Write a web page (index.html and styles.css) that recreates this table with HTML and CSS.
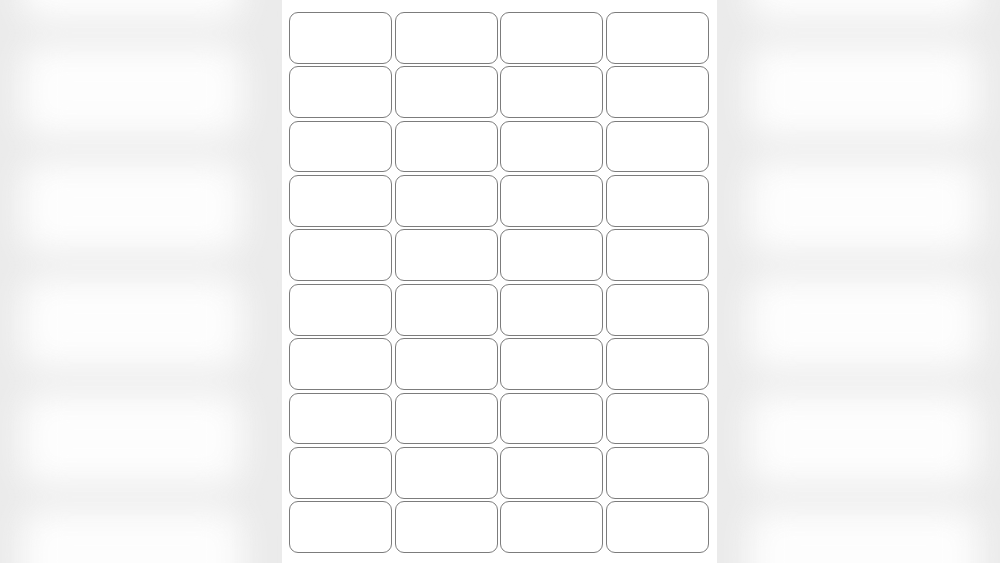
FILE: index.html
```html
<!DOCTYPE html>
<html lang="en">
<head>
    <meta charset="UTF-8">
    <meta name="viewport" content="width=device-width, initial-scale=1.0">
    <link rel="stylesheet" href="styles.css">
    <title>Label Sheet</title>
</head>
<body>
    <div class="backdrop left">
        <div class="blur-grid">
            <div class="blob"></div><div class="blob"></div><div class="blob"></div>
            <div class="blob"></div><div class="blob"></div><div class="blob"></div>
        </div>
    </div>
    <div class="sheet">
        <div class="labels" id="labels"></div>
    </div>
    <div class="backdrop right">
        <div class="blur-grid">
            <div class="blob"></div><div class="blob"></div><div class="blob"></div>
            <div class="blob"></div><div class="blob"></div><div class="blob"></div>
        </div>
    </div>
    <script>
        // 4 x 10 label sheet
        const labels = document.getElementById("labels");
        for (let i = 0; i < 40; i++) {
            const cell = document.createElement("div");
            cell.className = "label";
            labels.appendChild(cell);
        }
    </script>
</body>
</html>
```

FILE: styles.css
```css
/* label sheet preview */
html, body {
    margin: 0;
    padding: 0;
    height: 563px;
    overflow: hidden;
}

body {
    display: flex;
    background-color: #f2f2f2;
    font-family: "Liberation Sans", Arial, sans-serif;
}

.backdrop {
    position: relative;
    height: 563px;
    overflow: hidden;
    background-color: #ebebeb;
}

.backdrop.left {
    width: 282px;
}

.backdrop.right {
    width: 283px;
}

.blur-grid {
    display: flex;
    flex-direction: column;
    gap: 26px;
    margin-top: -70px;
    filter: blur(16px);
}

.left .blur-grid {
    padding: 0 40px 0 22px;
}

.right .blur-grid {
    padding: 0 22px 0 32px;
}

.blob {
    height: 90px;
    flex-shrink: 0;
    background-color: #fdfdfd;
    border-radius: 20px;
}

.sheet {
    width: 435px;
    height: 563px;
    background-color: #fff;
    box-sizing: border-box;
    padding: 12px 8px 10px 7px;
    box-shadow: 0 0 2px rgba(0, 0, 0, 0.06);
}

.labels {
    display: grid;
    grid-template-columns: repeat(4, 1fr);
    grid-template-rows: repeat(10, 1fr);
    column-gap: 2.5px;
    row-gap: 2.6px;
    height: 100%;
}

.label {
    border: 1.5px solid #7c7c7c;
    border-radius: 9px;
    background-color: #fff;
}
```
